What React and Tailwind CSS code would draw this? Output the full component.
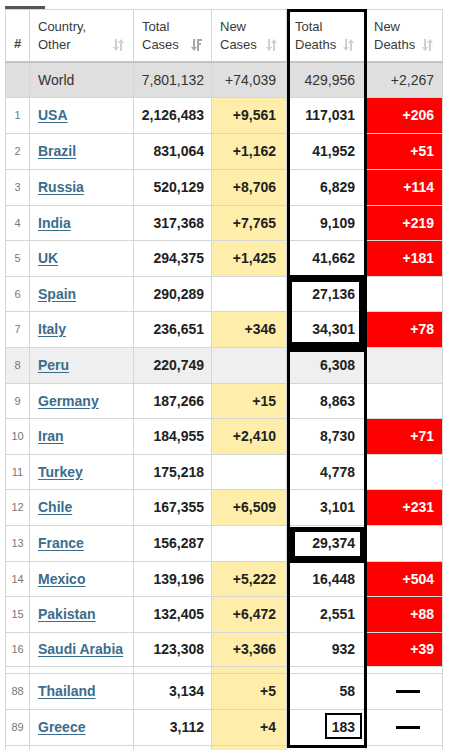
import React from "react";

const rows = [
  [1, "USA", "2,126,483", "+9,561", "117,031", "+206", 36],
  [2, "Brazil", "831,064", "+1,162", "41,952", "+51", 36],
  [3, "Russia", "520,129", "+8,706", "6,829", "+114", 36],
  [4, "India", "317,368", "+7,765", "9,109", "+219", 35],
  [5, "UK", "294,375", "+1,425", "41,662", "+181", 36],
  [6, "Spain", "290,289", "", "27,136", "", 35],
  [7, "Italy", "236,651", "+346", "34,301", "+78", 36],
  [8, "Peru", "220,749", "", "6,308", "", 36],
  [9, "Germany", "187,266", "+15", "8,863", "", 35],
  [10, "Iran", "184,955", "+2,410", "8,730", "+71", 36],
  [11, "Turkey", "175,218", "", "4,778", "", 35],
  [12, "Chile", "167,355", "+6,509", "3,101", "+231", 36],
  [13, "France", "156,287", "", "29,374", "", 36],
  [14, "Mexico", "139,196", "+5,222", "16,448", "+504", 35],
  [15, "Pakistan", "132,405", "+6,472", "2,551", "+88", 36],
  [16, "Saudi Arabia", "123,308", "+3,366", "932", "+39", 34],
];

const tail = [
  [88, "Thailand", "3,134", "+5", "58", "-", 36],
  [89, "Greece", "3,112", "+4", "183", "-", 36],
];

const grid = "grid grid-cols-[25px_104px_78px_75px_79px_77px]";
const cell = "border-r border-b border-[#d6d6d6]";

function SortIcon() {
  return (
    <svg width="11" height="14" viewBox="0 0 11 14" className="shrink-0">
      <rect x="2" y="1" width="2" height="9" fill="#d0d0d0" />
      <polygon points="0,9 6,9 3,13" fill="#d0d0d0" />
      <rect x="7" y="4" width="2" height="9" fill="#d0d0d0" />
      <polygon points="5,5 11,5 8,1" fill="#d0d0d0" />
    </svg>
  );
}

function SortedIcon() {
  return (
    <svg width="11" height="14" viewBox="0 0 11 14" className="shrink-0">
      <rect x="2" y="1" width="2" height="9" fill="#a8a8a8" />
      <polygon points="0,9 6,9 3,13" fill="#a8a8a8" />
      <rect x="6" y="1" width="2" height="12" fill="#a8a8a8" />
      <rect x="6" y="1" width="5" height="2" fill="#a8a8a8" />
      <rect x="6" y="5" width="4" height="2" fill="#a8a8a8" />
    </svg>
  );
}

function HeadCell({ l1, l2, sorted, extra = "" }) {
  return (
    <div className={`${cell} border-b-0 flex items-end justify-between pl-[8px] pr-[9px] ${extra}`}>
      <div className="self-center flex flex-col text-[13px] leading-[18px] text-[#3a3a3a]">
        <span>{l1}</span>
        <span>{l2}</span>
      </div>
      <div className="mb-[9px]">{sorted ? <SortedIcon /> : <SortIcon />}</div>
    </div>
  );
}

function Row({ r }) {
  const [n, name, cases, newCases, deaths, newDeaths, h] = r;
  const peru = name === "Peru";
  const base = peru ? "bg-[#efefef]" : "bg-white";
  const heights = { 34: "h-[34px]", 35: "h-[35px]", 36: "h-[36px]" };
  return (
    <div className={`${grid} ${heights[h]}`}>
      <div className={`${cell} border-l ${base} flex items-center justify-center text-[11px] text-[#777]`}>{n}</div>
      <div className={`${cell} ${base} flex items-center pl-[8px]`}>
        <span className="text-[14px] font-bold text-[#3b6d8c] underline underline-offset-2">{name}</span>
      </div>
      <div className={`${cell} ${base} flex items-center justify-end pr-[7px] text-[14px] font-bold text-[#222]`}>{cases}</div>
      <div className={`${cell} ${newCases ? "bg-[#ffeeaa]" : base} flex items-center justify-end pr-[10px] text-[14px] font-bold text-[#222]`}>{newCases}</div>
      <div className={`${cell} ${base} flex items-center justify-end pr-[10px] text-[14px] font-bold text-[#222]`}>{deaths}</div>
      <div
        className={`${cell} ${newDeaths && newDeaths !== "-" ? "bg-[#ff0000]" : base} flex items-center ${newDeaths === "-" ? "justify-center pl-[7px]" : "justify-end pr-[8px]"} text-[14px] font-bold text-white`}
      >
        {newDeaths === "-" ? <div className="w-[24px] h-[3px] bg-black" /> : newDeaths}
      </div>
    </div>
  );
}

function Spacer({ h }) {
  return (
    <div className={`${grid} ${h}`}>
      <div className={`${cell} border-l bg-white`} />
      <div className={`${cell} bg-white`} />
      <div className={`${cell} bg-white`} />
      <div className={`${cell} bg-[#ffeeaa]`} />
      <div className={`${cell} bg-white`} />
      <div className={`${cell} bg-white`} />
    </div>
  );
}

export default function App() {
  return (
    <div className="relative w-[449px] h-[750px] bg-white overflow-hidden font-['Liberation_Sans',Arial,sans-serif]">
      <div className="pl-[5px] pt-[6px]">
        <div className="w-[40px] h-[3px] bg-[#555]" />
        <div className="w-[438px] border-t border-[#d6d6d6]">
          {/* header */}
          <div className={`${grid} h-[53px] border-b-2 border-[#c4c4c4]`}>
            <div className={`${cell} border-b-0 border-l flex items-end justify-center pb-[8px] text-[13px] leading-[18px] font-bold text-[#444]`}>#</div>
            <HeadCell l1="Country," l2="Other" />
            <HeadCell l1="Total" l2="Cases" sorted />
            <HeadCell l1="New" l2="Cases" />
            <HeadCell l1="Total" l2="Deaths" extra="pr-[11px]" />
            <HeadCell l1="New" l2="Deaths" />
          </div>
          {/* world row */}
          <div className={`${grid} h-[35px] bg-[#dfdfdf] text-[14px] text-[#333]`}>
            <div className={`${cell} border-l`} />
            <div className={`${cell} flex items-center pl-[8px]`}>World</div>
            <div className={`${cell} flex items-center justify-end pr-[7px]`}>7,801,132</div>
            <div className={`${cell} flex items-center justify-end pr-[10px]`}>+74,039</div>
            <div className={`${cell} flex items-center justify-end pr-[10px]`}>429,956</div>
            <div className={`${cell} flex items-center justify-end pr-[8px]`}>+2,267</div>
          </div>
          {rows.map((r) => (
            <Row key={r[0]} r={r} />
          ))}
          <Spacer h="h-[7px]" />
          {tail.map((r) => (
            <Row key={r[0]} r={r} />
          ))}
          <Spacer h="h-[10px]" />
        </div>
      </div>

      {/* annotation boxes */}
      <div className="absolute left-[287px] top-[9px] w-[80px] h-[739px] border-[3px] border-black" />
      <div className="absolute left-[287px] top-[275px] w-[80px] h-[77px] border-l-[5px] border-t-[7px] border-r-[8px] border-b-[10px] border-black" />
      <div className="absolute left-[287px] top-[527px] w-[79px] h-[36px] border-l-[8px] border-t-[5px] border-r-[6px] border-b-[7px] border-black" />
      <div className="absolute left-[325px] top-[713px] w-[37px] h-[26px] border-2 border-black" />
    </div>
  );
}
